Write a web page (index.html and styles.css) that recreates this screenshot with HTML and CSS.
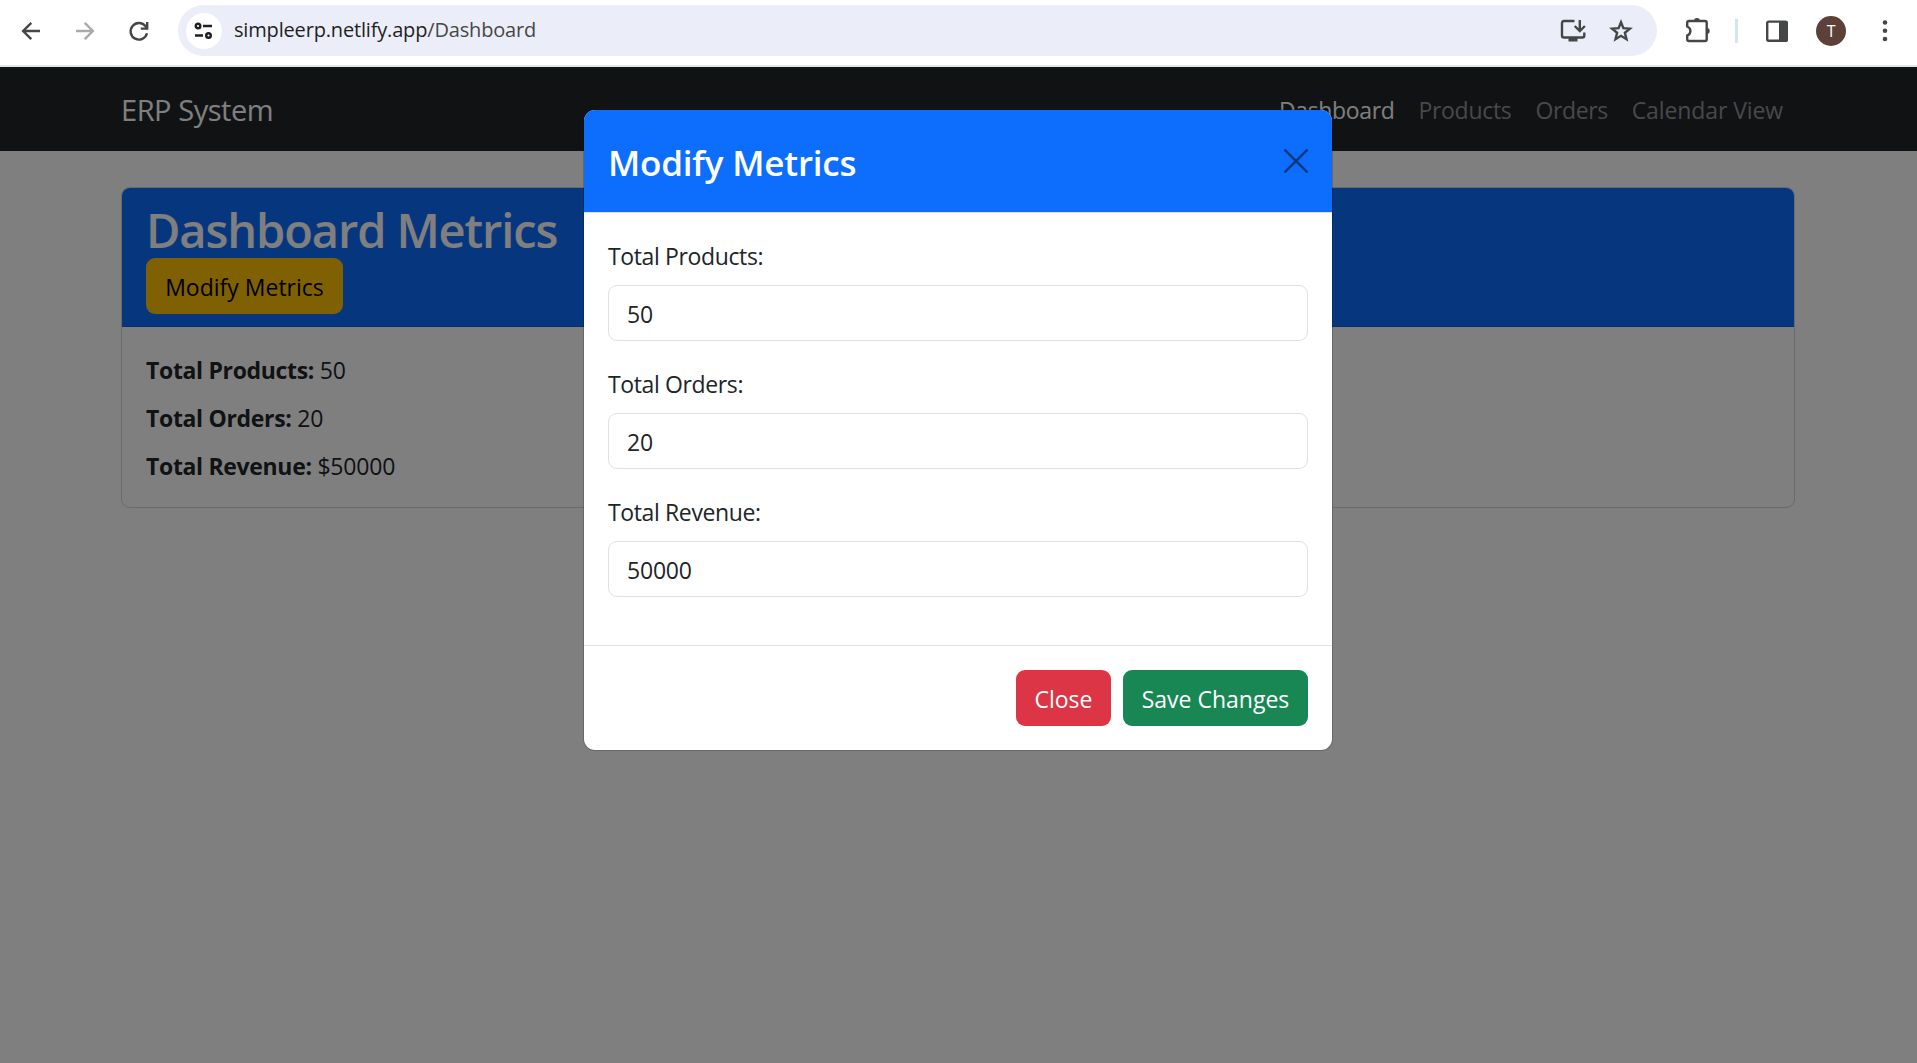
FILE: index.html
```html
<!DOCTYPE html>
<html lang="en">
<head>
<meta charset="utf-8">
<title>ERP System</title>
<link rel="stylesheet" href="styles.css">
</head>
<body>
<header class="browser">
  <svg class="ic back" width="24" height="24" viewBox="0 0 24 24"><path d="M21 12H4.500M12.300 3.800L4.100 12L12.300 20.200"/></svg>
  <svg class="ic forward" width="24" height="24" viewBox="0 0 24 24"><path d="M3 12H19.500M11.700 3.800L19.900 12L11.700 20.200"/></svg>
  <svg class="ic reload" width="24" height="24" viewBox="0 0 24 24"><path d="M20 14.300A8.300 8.300 0 1 1 18.600 7.300L20 9M20.200 3V9.600H13.800"/></svg>
  <div class="omnibox">
    <span class="site"><svg width="22" height="20" viewBox="0 0 22 20"><g fill="none" stroke="#1f1f1f" stroke-width="2.400"><circle cx="5" cy="5" r="2.300"/><path d="M10 5H19M2 14.500H10"/><circle cx="15.500" cy="14.500" r="2.300"/></g></svg></span>
    <span class="url">simpleerp.netlify.app<span class="path">/Dashboard</span></span>
    <svg class="ic install" width="26" height="26" viewBox="0 0 26 26"><path d="M14.500 3H4Q2 3 2 5V17.500Q2 19.500 4 19.500H22.300Q24.300 19.500 24.300 17.500V14.500M19.800 2V12M14.700 8L19.800 13L24.900 8"/><path d="M8.500 20H17.500V23.500H8.500Z" fill="#444746" stroke="none"/></svg>
    <svg class="ic star" width="26" height="26" viewBox="0 0 26 26"><path d="M13 4.200L15.400 10.100L21.900 10.600L16.900 14.800L18.500 21.200L13 17.800L7.500 21.200L9.100 14.800L4.100 10.600L10.600 10.100Z" stroke-linejoin="miter"/></svg>
  </div>
  <svg class="ic puzzle" width="28" height="28" viewBox="0 0 28 28"><path d="M5 5H21Q22.700 5 22.700 6.700V23.300Q22.700 25 21 25H5Q3.200 25 3.200 23.300V19.500Q6.400 18.200 6.400 15Q6.400 11.800 3.200 10.500V6.700Q3.200 5 5 5Z"/><path d="M10 5A3 3 0 0 1 16 5ZM22.700 12A3 3 0 0 1 22.700 18Z" fill="#444746" stroke="none"/></svg>
  <span class="divider"></span>
  <svg class="ic panel" width="24" height="24" viewBox="0 0 24 24"><rect x="2.200" y="2.600" width="19.600" height="19.200" rx="1.500"/><path d="M14 2H21Q23 2 23 4V21Q23 23 21 23H14Z" fill="#444746" stroke="none"/></svg>
  <span class="avatar">T</span>
  <svg class="dots" width="6" height="24" viewBox="0 0 6 24"><g fill="#444746"><circle cx="3" cy="3.500" r="2.300"/><circle cx="3" cy="11.800" r="2.300"/><circle cx="3" cy="20" r="2.300"/></g></svg>
</header>
<main class="app">
  <nav class="navbar">
    <span class="brand">ERP System</span>
    <a class="link active">Dashboard</a>
    <a class="link products">Products</a>
    <a class="link orders">Orders</a>
    <a class="link calendar">Calendar View</a>
  </nav>
  <section class="card">
    <div class="card-header">
      <h1>Dashboard Metrics</h1>
      <button class="btn warning">Modify Metrics</button>
    </div>
    <div class="card-body">
      <p><strong>Total Products:</strong> 50</p>
      <p><strong>Total Orders:</strong> 20</p>
      <p><strong>Total Revenue:</strong> $50000</p>
    </div>
  </section>
  <div class="backdrop">
    <div class="modal">
      <div class="modal-header">
        <h2>Modify Metrics</h2>
        <svg class="close-x" width="24" height="24" viewBox="0 0 24 24"><path d="M1.300 1.300L22.700 22.700M22.700 1.300L1.300 22.700"/></svg>
      </div>
      <div class="modal-body">
        <label for="products">Total Products:</label>
        <input id="products" value="50">
        <label for="orders">Total Orders:</label>
        <input id="orders" value="20">
        <label for="revenue">Total Revenue:</label>
        <input id="revenue" value="50000">
      </div>
      <div class="modal-footer">
        <button class="btn danger">Close</button>
        <button class="btn success">Save Changes</button>
      </div>
    </div>
  </div>
</main>
</body>
</html>
```
FILE: styles.css
```css
* { box-sizing: border-box; }
body {
  margin: 0;
  height: 1063px;
  overflow: hidden;
  display: flex;
  flex-direction: column;
  font: 23px/36px "Open Sans", "Noto Sans", sans-serif;
  letter-spacing: -0.2px;
  color: #212529;
}
h1, h2, p { margin: 0; }
.browser {
  height: 67px;
  padding: 5px 29px 9px 19px;
  border-bottom: 2px solid #dfe8e6;
  display: flex;
  align-items: center;
  background: #fff;
}
.ic { fill: none; stroke: #444746; stroke-width: 2.4; flex: none; }
.forward { stroke: #a9aaaa; margin-left: 30px; }
.reload { margin-left: 30px; }
.omnibox {
  width: 1479px;
  height: 51px;
  margin-left: 27px;
  padding: 0 23px 0 8px;
  border-radius: 26px;
  background: #ebeef8;
  display: flex;
  align-items: center;
}
.site {
  width: 36px;
  height: 36px;
  border-radius: 50%;
  background: #fff;
  display: flex;
  align-items: center;
  justify-content: center;
}
.url { flex: 1; margin-left: 12px; padding-bottom: 2px; font-size: 20px; letter-spacing: -0.17px; color: #1f1f1f; }
.path { color: #474747; }
.star { margin-left: 22px; }
.puzzle { margin: 0 0 2px 27px; }
.divider { width: 3px; height: 24px; margin-left: 23px; background: #d3e3fd; }
.panel { margin-left: 27px; }
.avatar {
  width: 30px;
  height: 30px;
  margin-left: 27px;
  border-radius: 50%;
  background: #5d4037;
  color: #fff;
  font-size: 16px;
  line-height: 30px;
  text-align: center;
}
.dots { margin-left: 36px; }
.app { flex: 1; position: relative; background: #fff; }
.navbar {
  height: 84px;
  padding: 2px 134px 0 121px;
  display: flex;
  align-items: center;
  background: #212529;
}
.brand { margin-right: auto; font-size: 29px; letter-spacing: -0.45px; color: #fff; }
.link { margin-left: 24px; color: #909294; }
.link.active { letter-spacing: -0.35px; color: #fff; }
.products { letter-spacing: -0.3px; }
.orders { letter-spacing: -0.4px; }
.calendar { letter-spacing: -0.1px; }
.card {
  width: 1674px;
  margin: 36px 0 0 121px;
  border: 1px solid #d3d4d5;
  border-radius: 9px;
  overflow: hidden;
}
.card-header {
  height: 139px;
  padding: 12px 24px;
  background: #0d6efd;
  border-bottom: 1px solid #0b5fdb;
}
h1 { height: 58px; padding-top: 2px; font-size: 47px; line-height: 57px; font-weight: 600; letter-spacing: -1.1px; color: #fff; }
.btn {
  height: 56px;
  padding: 2px 0 0;
  border: 0;
  border-radius: 9px;
  font: inherit;
  letter-spacing: 0;
  color: #fff;
}
.warning { width: 197px; background: #ffc107; color: #000; display: block; }
.card-body { height: 180px; padding: 25px 24px; }
.card-body p { margin-bottom: 12px; }
.card-body strong { letter-spacing: -0.33px; }
.backdrop {
  position: absolute;
  inset: 0;
  padding: 42px 1px 0 0;
  background: rgba(0, 0, 0, .5);
}
.modal {
  width: 750px;
  height: 642px;
  margin: 0 auto;
  border: 1px solid rgba(0, 0, 0, .175);
  border-radius: 12px;
  background: #fff;
  background-clip: padding-box;
}
.modal-header {
  height: 103px;
  padding: 0 24px;
  border-bottom: 1px solid #dee2e6;
  border-radius: 11px 11px 0 0;
  background: #0d6efd;
  background-clip: padding-box;
  display: flex;
  align-items: center;
  justify-content: space-between;
}
h2 { padding-top: 3px; font-size: 35px; line-height: 54px; font-weight: 600; color: #fff; }
.close-x { fill: none; stroke: #073885; stroke-width: 2.6; stroke-linecap: round; }
.modal-body { height: 432px; padding: 25px 24px 0; display: flex; flex-direction: column; }
.modal-body label { letter-spacing: -0.37px; }
.modal-body input {
  height: 56px;
  margin: 11px 0 25px;
  padding: 2px 18px 0;
  border: 1px solid #dee2e6;
  border-radius: 9px;
  font: inherit;
  letter-spacing: inherit;
  color: #212529;
}
.modal-footer {
  height: 105px;
  padding: 24px;
  border-top: 1px solid #dee2e6;
  display: flex;
  justify-content: flex-end;
  gap: 12px;
}
.danger { width: 95px; background: #dc3545; }
.success { width: 185px; background: #198754; }
```
